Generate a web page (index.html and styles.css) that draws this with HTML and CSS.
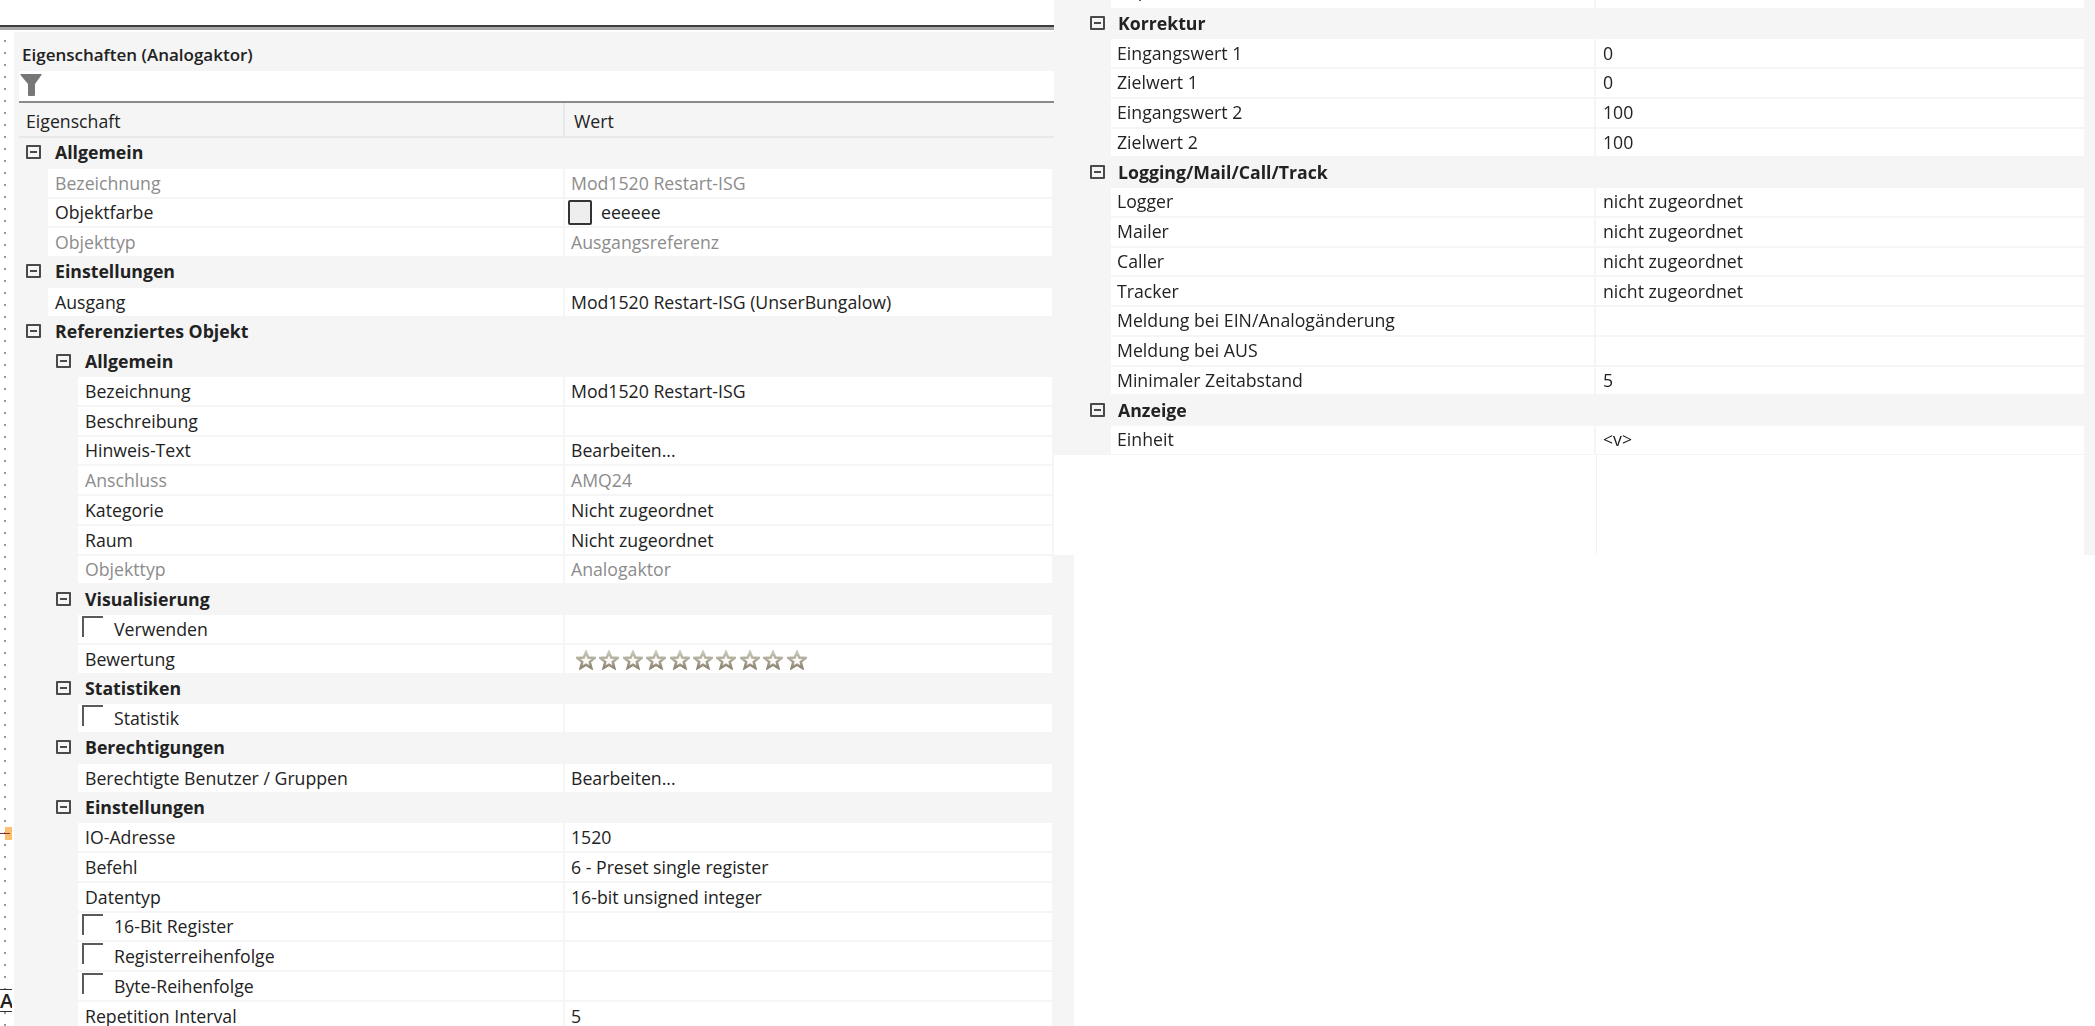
FILE: index.html
```html
<!DOCTYPE html>
<html lang="de">
<head>
    <meta charset="UTF-8">
    <title>Eigenschaften (Analogaktor)</title>
    <link rel="stylesheet" href="styles.css">
</head>
<body>
    <svg width="0" height="0" class="defs">
        <linearGradient id="starline" x1="0" y1="0" x2="0" y2="1">
            <stop offset="0" stop-color="#cbc7b9"/>
            <stop offset="1" stop-color="#8d8773"/>
        </linearGradient>
        <symbol id="star" viewBox="0 0 20 20">
            <path d="M10 2l2.300 5.600 6.200.4-4.700 3.900 1.500 6L10 14.600 4.700 17.900l1.500-6L1.500 8l6.200-.4z" fill="#fbfaf6" stroke="url(#starline)" stroke-width="2.500" stroke-linejoin="miter"/>
        </symbol>
    </svg>

    <div class="canvas">
        <div class="gutter">
            <div class="marker"><span class="marker-line"></span></div>
            <div class="gutter-label">AC</div>
        </div>

        <div class="topline"></div>

        <div class="panel left-panel">
            <div class="title">Eigenschaften (Analogaktor)</div>
            <div class="filter">
                <svg class="funnel" viewBox="0 0 22 22"><path d="M1 0h20q1 0 .5 1L15 10v11q0 1-1 1H9q-1 0-1-1V10L.5 1Q0 0 1 0z" fill="#777"/></svg>
            </div>
            <div class="head">
                <div class="head-name">Eigenschaft</div>
                <div class="head-value">Wert</div>
            </div>

            <div class="group"><span class="exp"></span>Allgemein</div>
            <div class="row lvl1 off"><div class="name">Bezeichnung</div><div class="val">Mod1520 Restart-ISG</div></div>
            <div class="row lvl1"><div class="name">Objektfarbe</div><div class="val"><span class="swatch"></span>eeeeee</div></div>
            <div class="row lvl1 off"><div class="name">Objekttyp</div><div class="val">Ausgangsreferenz</div></div>

            <div class="group"><span class="exp"></span>Einstellungen</div>
            <div class="row lvl1"><div class="name">Ausgang</div><div class="val">Mod1520 Restart-ISG (UnserBungalow)</div></div>

            <div class="group"><span class="exp"></span>Referenziertes Objekt</div>
            <div class="group sub"><span class="exp"></span>Allgemein</div>
            <div class="row"><div class="name">Bezeichnung</div><div class="val">Mod1520 Restart-ISG</div></div>
            <div class="row"><div class="name">Beschreibung</div><div class="val"></div></div>
            <div class="row"><div class="name">Hinweis-Text</div><div class="val">Bearbeiten...</div></div>
            <div class="row off"><div class="name">Anschluss</div><div class="val">AMQ24</div></div>
            <div class="row"><div class="name">Kategorie</div><div class="val">Nicht zugeordnet</div></div>
            <div class="row"><div class="name">Raum</div><div class="val">Nicht zugeordnet</div></div>
            <div class="row off"><div class="name">Objekttyp</div><div class="val">Analogaktor</div></div>

            <div class="group sub"><span class="exp"></span>Visualisierung</div>
            <div class="row"><div class="name check"><span class="box"></span>Verwenden</div><div class="val"></div></div>
            <div class="row"><div class="name">Bewertung</div>
                <div class="val stars">
                    <svg><use href="#star"/></svg><svg><use href="#star"/></svg><svg><use href="#star"/></svg><svg><use href="#star"/></svg><svg><use href="#star"/></svg><svg><use href="#star"/></svg><svg><use href="#star"/></svg><svg><use href="#star"/></svg><svg><use href="#star"/></svg><svg><use href="#star"/></svg>
                </div>
            </div>

            <div class="group sub"><span class="exp"></span>Statistiken</div>
            <div class="row"><div class="name check"><span class="box"></span>Statistik</div><div class="val"></div></div>

            <div class="group sub"><span class="exp"></span>Berechtigungen</div>
            <div class="row"><div class="name">Berechtigte Benutzer / Gruppen</div><div class="val">Bearbeiten...</div></div>

            <div class="group sub"><span class="exp"></span>Einstellungen</div>
            <div class="row"><div class="name">IO-Adresse</div><div class="val">1520</div></div>
            <div class="row"><div class="name">Befehl</div><div class="val">6 - Preset single register</div></div>
            <div class="row"><div class="name">Datentyp</div><div class="val">16-bit unsigned integer</div></div>
            <div class="row"><div class="name check"><span class="box"></span>16-Bit Register</div><div class="val"></div></div>
            <div class="row"><div class="name check"><span class="box"></span>Registerreihenfolge</div><div class="val"></div></div>
            <div class="row"><div class="name check"><span class="box"></span>Byte-Reihenfolge</div><div class="val"></div></div>
            <div class="row"><div class="name">Repetition Interval</div><div class="val">5</div></div>
        </div>

        <div class="panel right-panel">
            <div class="row lvl1 cut"><div class="name">Repetition Interval</div><div class="val"></div></div>

            <div class="group"><span class="exp"></span>Korrektur</div>
            <div class="row lvl1"><div class="name">Eingangswert 1</div><div class="val">0</div></div>
            <div class="row lvl1"><div class="name">Zielwert 1</div><div class="val">0</div></div>
            <div class="row lvl1"><div class="name">Eingangswert 2</div><div class="val">100</div></div>
            <div class="row lvl1"><div class="name">Zielwert 2</div><div class="val">100</div></div>

            <div class="group"><span class="exp"></span>Logging/Mail/Call/Track</div>
            <div class="row lvl1"><div class="name">Logger</div><div class="val">nicht zugeordnet</div></div>
            <div class="row lvl1"><div class="name">Mailer</div><div class="val">nicht zugeordnet</div></div>
            <div class="row lvl1"><div class="name">Caller</div><div class="val">nicht zugeordnet</div></div>
            <div class="row lvl1"><div class="name">Tracker</div><div class="val">nicht zugeordnet</div></div>
            <div class="row lvl1"><div class="name">Meldung bei EIN/Analogänderung</div><div class="val"></div></div>
            <div class="row lvl1"><div class="name">Meldung bei AUS</div><div class="val"></div></div>
            <div class="row lvl1"><div class="name">Minimaler Zeitabstand</div><div class="val">5</div></div>

            <div class="group"><span class="exp"></span>Anzeige</div>
            <div class="row lvl1"><div class="name">Einheit</div><div class="val">&lt;v&gt;</div></div>
            <div class="empty"></div>
        </div>
    </div>
</body>
</html>
```

FILE: styles.css
```css
html, body {
    margin: 0;
    height: 100%;
    background: #fff;
    overflow: hidden;
}
.defs {
    position: absolute;
}
.canvas {
    position: relative;
    width: 2095px;
    height: 1026px;
    overflow: hidden;
    font-family: "Open Sans", "Noto Sans", sans-serif;
    font-size: 17.7px;
    color: #222;
    filter: blur(0.35px);
}
.gutter {
    position: absolute;
    left: 0;
    top: 32px;
    width: 12px;
    height: 994px;
    background-image: radial-gradient(circle, #999 0.8px, transparent 1.1px);
    background-size: 10px 12px;
    background-position: 0 3px;
    overflow: hidden;
}
.marker {
    position: absolute;
    left: 5px;
    top: 795px;
    width: 7px;
    height: 13px;
    background: #fbbf6d;
}
.marker-line {
    position: absolute;
    left: -5px;
    top: 6px;
    width: 10px;
    height: 1px;
    background: #8a2a2a;
}
.gutter-label {
    position: absolute;
    left: 0;
    top: 957px;
    height: 21px;
    line-height: 21px;
    width: 12px;
    overflow: hidden;
    font-weight: 600;
    font-size: 20px;
    background: #fff;
    border-top: 1px solid #333;
    border-bottom: 1px solid #333;
}
.topline {
    position: absolute;
    left: 0;
    top: 25px;
    width: 1055px;
    height: 2px;
    background: #3c3c3c;
    border-bottom: 3px solid #a8a8a8;
}
.panel {
    position: absolute;
    background: #f5f5f5;
}
.left-panel {
    left: 14px;
    top: 32px;
    width: 1060px;
    height: 994px;
}
.right-panel {
    left: 1054px;
    top: 0;
    width: 1041px;
    height: 555px;
}
.title {
    height: 39px;
    padding: 13px 0 0 8px;
    box-sizing: border-box;
    font-size: 17px;
    font-weight: 600;
    line-height: 20px;
}
.filter {
    margin-left: 5px;
    width: 1036px;
    height: 32px;
    background: #fff;
    border-bottom: 2px solid #8a8a8a;
    box-sizing: border-box;
    padding: 3px 0 0 1px;
}
.funnel {
    display: block;
    width: 22px;
    height: 22px;
}
.head {
    display: flex;
    margin-left: 5px;
    width: 1036px;
    height: 35px;
    box-sizing: border-box;
    border-bottom: 2px solid #e8e8e8;
    line-height: 36px;
}
.head-name {
    width: 546px;
    padding-left: 7px;
    box-sizing: border-box;
    border-right: 2px solid #e8e8e8;
}
.head-value {
    padding-left: 9px;
}
.group {
    display: flex;
    align-items: center;
    height: 29.76px;
    padding: 0 0 1px 12px;
    font-weight: 700;
    box-sizing: border-box;
}
.group.sub {
    padding-left: 42px;
}
.exp {
    position: relative;
    width: 15px;
    height: 14px;
    box-sizing: border-box;
    border: 2px solid #4a4a4a;
    border-radius: 1px;
    margin-right: 14px;
    flex: none;
}
.exp::after {
    content: "";
    position: absolute;
    left: 2px;
    right: 2px;
    top: 4px;
    height: 2px;
    background: #4a4a4a;
}
.row {
    display: flex;
    height: 29.76px;
    margin-left: 64px;
    width: 974px;
    box-sizing: border-box;
    line-height: 27px;
    border-top: 1px solid #f5f5f5;
    border-bottom: 1px solid #f5f5f5;
}
.row.lvl1 {
    margin-left: 34px;
    width: 1004px;
}
.name {
    flex: 1;
    display: flex;
    align-items: center;
    background: #fff;
    padding: 1px 0 0 7px;
    border-right: 2px solid #f5f5f5;
    white-space: nowrap;
}
.val {
    flex: none;
    width: 487px;
    display: flex;
    align-items: center;
    background: #fff;
    padding: 1px 0 0 6px;
    box-sizing: border-box;
    white-space: nowrap;
}
.off .name, .off .val {
    color: #8c8c8c;
}
.name.check {
    position: relative;
    padding-left: 36px;
}
.box {
    position: absolute;
    left: 4px;
    top: 1px;
    width: 21px;
    height: 21px;
    box-sizing: border-box;
    border-top: 2px solid #5a5a5a;
    border-left: 2px solid #5a5a5a;
}
.swatch {
    width: 24px;
    height: 25px;
    margin: -1px 9px 0 -3px;
    box-sizing: border-box;
    border: 2px solid #333;
    border-radius: 2px;
    background: #eee;
}
.val.stars {
    padding-left: 11px;
    padding-top: 3px;
    gap: 3.4px;
}
.stars svg {
    width: 20px;
    height: 20px;
}
.right-panel .row.lvl1 {
    margin-left: 57px;
    width: 973px;
}
.right-panel .group {
    padding-left: 36px;
}
.right-panel .exp {
    margin-right: 13px;
}
.right-panel .name {
    padding: 0 0 0 6px;
}
.right-panel .val {
    width: 488px;
    padding: 0 0 0 7px;
}
.right-panel .row.cut {
    height: 8.5px;
    border-top: 0;
    overflow: hidden;
}
.right-panel .row.cut .name {
    align-items: flex-end;
    padding-bottom: 4px;
}
.empty {
    height: 100.1px;
    width: 1030px;
    background: #fff;
    position: relative;
}
.empty::after {
    content: "";
    position: absolute;
    left: 542px;
    top: 0;
    bottom: 0;
    width: 1px;
    background: #f2f2f2;
}
```
